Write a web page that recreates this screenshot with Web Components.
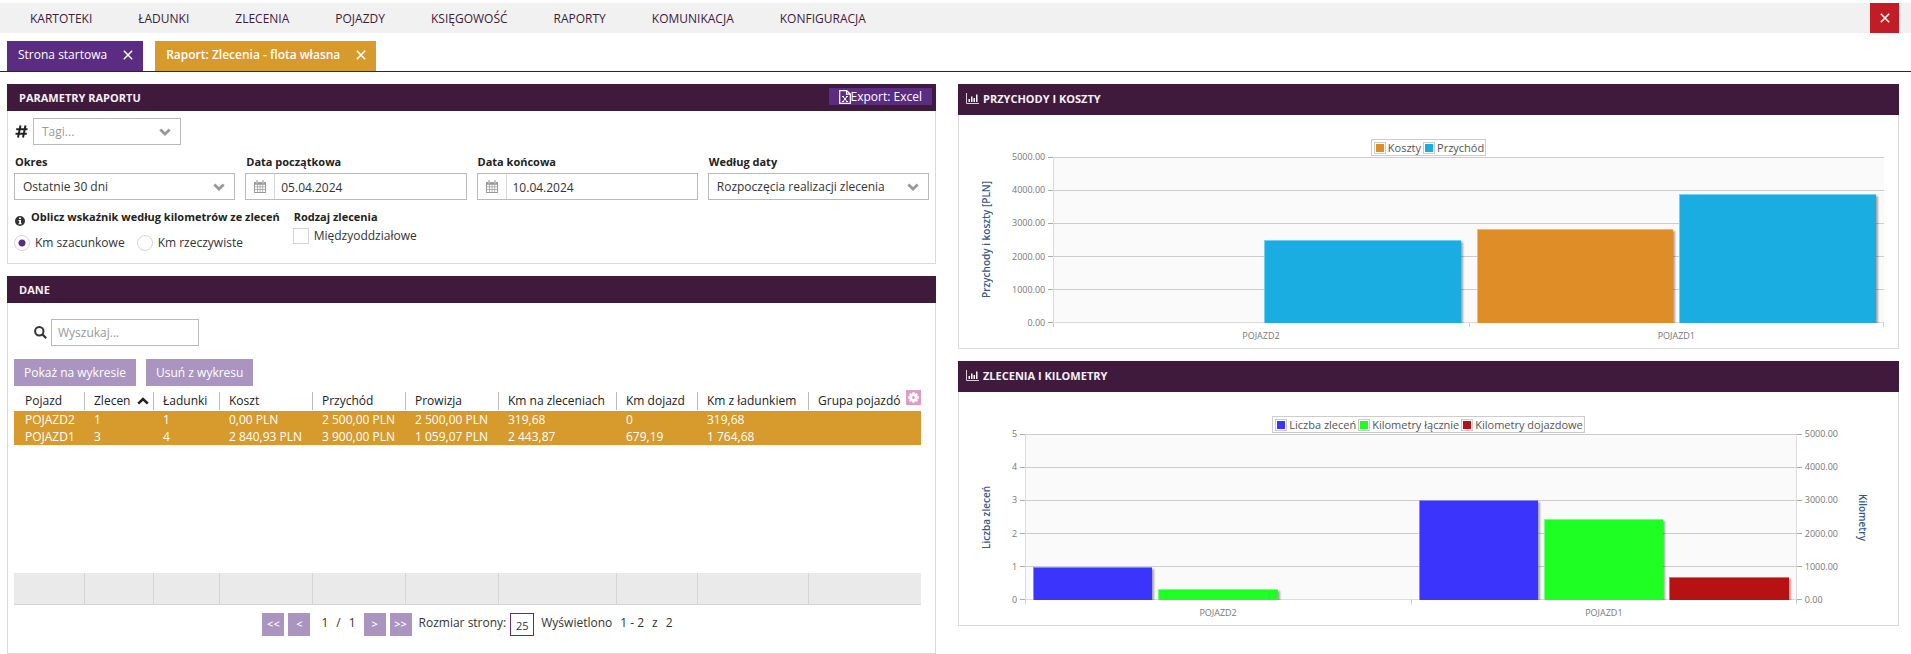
<!DOCTYPE html>
<html lang="pl">
<head>
<meta charset="utf-8">
<title>Raport: Zlecenia - flota własna</title>
<style>
    body {
        margin: 0;
        padding-top: 3px;
        background: #fff;
        color: #333;
        font: 12px/16px "Open Sans", "Noto Sans", sans-serif;
        --plum: #3f1a3c;
        --violet: #5a2d82;
        --lilac: #aa94c0;
        --gold: #d69a2d;
        --line: #dcd8dc;
        --field: #b9b9b9;
    }
    main {
        display: grid;
        grid-template-columns: 929fr 941fr;
        column-gap: 22px;
        padding: 12px 12px 0 7px;
        align-items: start;
    }
    .column {
        display: flex;
        flex-direction: column;
        gap: 12px;
        min-width: 0;
    }
</style>
</head>
<body>
<app-menu></app-menu>
<tab-bar>
    <tab-item>Strona startowa</tab-item>
    <tab-item active>Raport: Zlecenia - flota własna</tab-item>
</tab-bar>
<main>
    <div class="column">
        <report-panel heading="Parametry raportu">
            <export-button slot="actions">Export: Excel</export-button>
            <report-params></report-params>
        </report-panel>
        <report-panel heading="Dane">
            <report-data></report-data>
        </report-panel>
    </div>
    <div class="column">
        <report-panel chart heading="Przychody i koszty">
            <bar-chart id="income"></bar-chart>
        </report-panel>
        <report-panel chart heading="Zlecenia i kilometry">
            <bar-chart id="distance"></bar-chart>
        </report-panel>
    </div>
</main>

<script>
// Rules shared by every shadow root
const base = `
    :host, *, *::before, *::after { box-sizing: border-box; }
    button, input, select { font: inherit; color: inherit; margin: 0; border-radius: 0; }
    button { border: 0; padding: 0; background: none; cursor: pointer; }
    svg { display: block; flex: none; }
`;

const icons = {
    close: `<svg width="10" height="10" viewBox="0 0 10 10"><path d="M.8.8l8.400 8.400M9.200.8L.8 9.200" stroke="#fff" stroke-width="1.5" fill="none"/></svg>`,
    chevron: `<svg width="12" height="8" viewBox="0 0 12 8"><path d="M1.3 1.6L6 6l4.7-4.4" stroke="#999" stroke-width="2.8" fill="none"/></svg>`,
    chart: `<svg width="13" height="11" viewBox="0 0 13 11"><path d="M.5 0v10.5H13" stroke="#d9cfd9" fill="none"/><path d="M2.500 6h1.500v3H2.500zM5 3.500h1.500V9H5zM7.500 5H9v4H7.500zM10 1.500h1.500V9H10z" fill="#fff"/></svg>`,
    excel: `<svg width="12" height="14" viewBox="0 0 12 14"><path d="M.7.7h7L11.3 4v9.300H.7zM7.500.7V4.200h3.800" stroke="#fff" stroke-width="1.2" fill="none"/><path d="M4 6.500l4 5M8 6.500l-4 5M3 6.500h2M7 6.500h2M3 11.500h2M7 11.500h2" stroke="#fff" fill="none"/></svg>`,
    calendar: `<svg width="12" height="13" viewBox="0 0 12 13"><path d="M0 2h12v11H0z" fill="#999"/><path d="M2.200 0h1.600v3H2.200zM8.200 0h1.600v3H8.200z" fill="#999" stroke="#fff" stroke-width=".4"/><path d="M1 4.800h2v1.700H1zM3.700 4.800h2v1.700h-2zM6.400 4.800h2v1.700h-2zM9.100 4.800H11v1.700H9.100zM1 7.300h2V9H1zM3.700 7.300h2V9h-2zM6.400 7.300h2V9h-2zM9.100 7.300H11V9H9.100zM1 9.800h2V12H1zM3.700 9.800h2V12h-2zM6.400 9.800h2V12h-2zM9.100 9.800H11V12H9.100z" fill="#fff"/></svg>`,
    info: `<svg width="10" height="10" viewBox="0 0 10 10"><circle cx="5" cy="5" r="5" fill="#333"/><path d="M4 1.500h2V3H4zM3.500 4H6v3.200h.7v1H3.500v-1h.7V5h-.7z" fill="#fff"/></svg>`,
    hash: `<svg width="13" height="13" viewBox="0 0 13 13"><path d="M5.500.5l-2.500 12M10.500.5l-2.500 12M1.200 4.200h11.300M.5 8.800h11.300" stroke="#222" stroke-width="2" fill="none"/></svg>`,
    search: `<svg width="13" height="13" viewBox="0 0 13 13"><circle cx="5.300" cy="5.300" r="4.200" stroke="#333" stroke-width="2" fill="none"/><path d="M8.300 8.300l3.900 3.900" stroke="#333" stroke-width="2.200"/></svg>`,
    sort: `<svg width="12" height="8" viewBox="0 0 12 8"><path d="M1.200 6.600L6 2l4.800 4.600" stroke="#222" stroke-width="2.600" fill="none"/></svg>`,
    gear: `<svg width="11" height="11" viewBox="-5.500 -5.500 11 11"><g fill="#fff"><circle r="4"/><path d="M-1.200-5.300h2.400v10.600h-2.400zM-5.300-1.200h10.600v2.400H-5.300z"/><path d="M-1.200-5.300h2.400v10.600h-2.400zM-5.300-1.200h10.600v2.400H-5.300z" transform="rotate(45)"/></g><circle r="1.500" fill="#e59ac4"/></svg>`
};

// Base class: renders css() and html() in an open shadow root
class Block extends HTMLElement {
    connectedCallback() {
        if (this.shadowRoot) return;
        const template = document.createElement("template");
        template.innerHTML = `<style>${base}${this.css()}</style>${this.html()}`;
        this.attachShadow({ mode: "open" }).appendChild(template.content.cloneNode(true));
    }
}

class AppMenu extends Block {
    css() {
        return `
            :host { display: block; background: #f1f1f1; }
            nav { display: flex; align-items: center; height: 30px; padding: 0 12px 0 30px; }
            a { color: var(--plum); text-decoration: none; padding-top: 2px; margin-right: 46px; text-transform: uppercase; }
            button { margin-left: auto; width: 29px; height: 30px; background: #c01d27; display: grid; place-items: center; }
        `;
    }
    html() {
        const items = ["Kartoteki", "Ładunki", "Zlecenia", "Pojazdy", "Księgowość", "Raporty", "Komunikacja", "Konfiguracja"];
        return `<nav>${items.map(item => `<a href="#">${item}</a>`).join("")}
            <button type="button" aria-label="Zamknij">${icons.close}</button></nav>`;
    }
}

class TabBar extends Block {
    css() {
        return `:host { display: flex; gap: 12px; padding: 8px 7px 0; border-bottom: 1px solid var(--plum); }`;
    }
    html() {
        return `<slot></slot>`;
    }
}

class TabItem extends Block {
    css() {
        return `
            :host { display: flex; align-items: center; gap: 16px; height: 30px; padding: 0 10px 2px 11px; background: var(--violet); color: #fff; }
            :host([active]) { background: var(--gold); font-weight: 600; }
            a { color: inherit; text-decoration: none; }
        `;
    }
    html() {
        return `<a href="#"><slot></slot></a><button type="button" aria-label="Zamknij kartę">${icons.close}</button>`;
    }
}

class ReportPanel extends Block {
    css() {
        return `
            :host { display: block; }
            header { display: flex; align-items: center; justify-content: space-between; min-height: 27px; padding: 0 4px 0 12px; background: var(--plum); }
            h2 { display: flex; align-items: center; gap: 4px; margin: 0; font-size: 11px; line-height: 16px; color: #f4f0f4; text-transform: uppercase; }
            :host([chart]) header { min-height: 31px; padding: 0 8px 2px; }
            .body { border: 1px solid var(--line); border-top: 0; }
        `;
    }
    html() {
        const icon = this.hasAttribute("chart") ? icons.chart : "";
        return `<header><h2>${icon}<span>${this.getAttribute("heading")}</span></h2><slot name="actions"></slot></header>
            <div class="body"><slot></slot></div>`;
    }
}

class ExportButton extends Block {
    css() {
        return `
            :host { display: block; margin-bottom: 2px; }
            button { display: flex; align-items: center; height: 17px; padding: 0 10px; background: var(--violet); color: #fff; }
        `;
    }
    html() {
        return `<button type="button">${icons.excel}<slot></slot></button>`;
    }
}

// Drop-down with its own arrow; attributes: value, label, muted
class SelectField extends Block {
    css() {
        return `
            :host { display: block; min-width: 0; }
            label { display: block; padding-left: 1px; margin-bottom: 3px; font-size: 11px; font-weight: bold; color: #222; }
            .box { display: grid; align-items: center; }
            select, svg { grid-area: 1 / 1; }
            select { appearance: none; width: 100%; height: 27px; padding: 0 28px 0 8px; border: 1px solid var(--field); background: #fff; }
            :host([muted]) select { color: #999; }
            svg { justify-self: end; margin-right: 10px; pointer-events: none; }
        `;
    }
    html() {
        const label = this.getAttribute("label");
        const value = this.getAttribute("value");
        return `${label ? `<label for="field">${label}</label>` : ""}
            <div class="box"><select id="field" aria-label="${label || "Tagi"}"><option>${value}</option></select>${icons.chevron}</div>`;
    }
}

class DateField extends Block {
    css() {
        return `
            :host { display: block; min-width: 0; }
            label { display: block; padding-left: 1px; margin-bottom: 3px; font-size: 11px; font-weight: bold; color: #222; }
            .box { display: flex; height: 27px; border: 1px solid var(--field); }
            button { width: 29px; display: grid; place-items: center; border-right: 1px solid var(--line); }
            input { flex: 1; min-width: 0; border: 0; padding: 2px 6px 0; background: none; }
        `;
    }
    html() {
        return `<label for="field">${this.getAttribute("label")}</label>
            <div class="box"><button type="button" aria-label="Kalendarz">${icons.calendar}</button>
            <input id="field" type="text" value="${this.getAttribute("value")}"></div>`;
    }
}

class ReportParams extends Block {
    css() {
        return `
            :host { display: block; padding: 7px 6px 12px; }
            .tags { display: flex; align-items: center; gap: 5px; padding-left: 1px; }
            .tags select-field { width: 148px; }
            .fields { display: grid; grid-template-columns: repeat(4, 1fr); gap: 10px; margin-top: 9px; }
            .options { display: flex; gap: 12px; margin-top: 9px; }
            fieldset { border: 0; margin: 0; padding: 0; min-width: 0; }
            legend { display: flex; align-items: flex-start; gap: 6px; height: 16px; padding: 0 1px; font-size: 11px; font-weight: bold; color: #222; }
            legend svg { margin-top: 7px; }
            .radios { display: flex; gap: 12px; margin-top: 10px; }
            .options label { display: flex; align-items: center; gap: 5px; }
            input { appearance: none; width: 16px; height: 16px; border: 1px solid #dccfdc; background: #fff; }
            input[type=radio] { border-radius: 50%; }
            input[type=radio]:checked { background: radial-gradient(var(--violet) 3px, #fff 4px); }
            .kind label { margin-top: 3px; }
        `;
    }
    html() {
        return `
            <div class="tags">${icons.hash}<select-field muted value="Tagi..."></select-field></div>
            <div class="fields">
                <select-field label="Okres" value="Ostatnie 30 dni"></select-field>
                <date-field label="Data początkowa" value="05.04.2024"></date-field>
                <date-field label="Data końcowa" value="10.04.2024"></date-field>
                <select-field label="Według daty" value="Rozpoczęcia realizacji zlecenia"></select-field>
            </div>
            <div class="options">
                <fieldset>
                    <legend>${icons.info}<span>Oblicz wskaźnik według kilometrów ze zleceń</span></legend>
                    <div class="radios">
                        <label><input type="radio" name="km" checked>Km szacunkowe</label>
                        <label><input type="radio" name="km">Km rzeczywiste</label>
                    </div>
                </fieldset>
                <fieldset class="kind">
                    <legend>Rodzaj zlecenia</legend>
                    <label><input type="checkbox">Międzyoddziałowe</label>
                </fieldset>
            </div>`;
    }
}

class ReportData extends Block {
    css() {
        return `
            :host { display: block; padding: 16px 14px 17px 6px; }
            .search { display: flex; align-items: center; gap: 4px; padding-left: 20px; }
            .search input { width: 148px; height: 27px; padding: 0 6px; border: 1px solid var(--field); }
            ::placeholder { color: #999; opacity: 1; }
            .buttons { display: flex; gap: 10px; margin: 13px 0 4px; }
            .buttons button { height: 27px; padding: 0 10px; background: var(--lilac); color: #fff; }
            table { width: 100%; table-layout: fixed; border-collapse: collapse; }
            th, td { padding: 0; text-align: left; font-weight: normal; white-space: nowrap; }
            th { height: 21px; vertical-align: top; color: #222; }
            th div { display: flex; align-items: center; justify-content: space-between; height: 18px; margin-top: 2px; padding: 0 4px 0 9px; border-left: 1px solid #bbb; }
            th:first-child div { padding-left: 10px; border-left-color: transparent; }
            th:last-child { display: flex; }
            th:last-child div { flex: 1; min-width: 0; padding-right: 0; }
            th button { flex: none; width: 15px; height: 15px; display: grid; place-items: center; background: #e59ac4; }
            tbody tr { height: 17px; background: var(--gold); color: #fff; }
            td { padding-left: 10px; line-height: 16px; }
            td:first-child { padding-left: 11px; }
            tbody .rest { height: 128px; background: none; }
            tfoot td { height: 31px; background: #eaeaea; border: solid #d5d5d5; border-width: 0 0 1px 1px; }
            tfoot td:first-child { border-left: 0; }
            .pager { display: flex; justify-content: center; margin-top: 8px; }
            .pager button { width: 22px; height: 23px; background: var(--lilac); color: #fff; font-size: 11px; font-weight: 600; }
            .pager button + button { margin-left: 4px; }
            .pager div { display: flex; gap: 8px; line-height: 19px; }
            .pager label { line-height: 19px; padding: 0 4px 0 7px; }
            .pager .page { padding: 0 8px 0 11px; }
            .pager input { width: 24px; height: 23px; padding: 2px 0 0; border: 1px solid var(--violet); font-size: 11px; text-align: center; }
            .pager .shown { padding-left: 7px; }
        `;
    }
    html() {
        const columns = [
            ["Pojazd", 70], ["Zlecen", 69], ["Ładunki", 66], ["Koszt", 93], ["Przychód", 93], ["Prowizja", 93],
            ["Km na zleceniach", 118], ["Km dojazd", 81], ["Km z ładunkiem", 111], ["Grupa pojazdó", 113]
        ];
        const rows = [
            ["POJAZD2", "1", "1", "0,00 PLN", "2 500,00 PLN", "2 500,00 PLN", "319,68", "0", "319,68", ""],
            ["POJAZD1", "3", "4", "2 840,93 PLN", "3 900,00 PLN", "1 059,07 PLN", "2 443,87", "679,19", "1 764,68", ""]
        ];
        const head = columns.map(([name], i) => `<th scope="col"><div><span>${name}</span>${i === 1 ? icons.sort : ""}</div>${
            i === columns.length - 1 ? `<button type="button" aria-label="Ustawienia">${icons.gear}</button>` : ""}</th>`).join("");
        return `
            <div class="search">${icons.search}<input type="text" placeholder="Wyszukaj..." aria-label="Wyszukaj"></div>
            <div class="buttons"><button type="button">Pokaż na wykresie</button><button type="button">Usuń z wykresu</button></div>
            <table>
                <colgroup>${columns.map(([, width]) => `<col style="width: ${width}px">`).join("")}</colgroup>
                <thead><tr>${head}</tr></thead>
                <tbody>
                    ${rows.map(row => `<tr>${row.map(cell => `<td>${cell}</td>`).join("")}</tr>`).join("")}
                    <tr class="rest"><td colspan="${columns.length}"></td></tr>
                </tbody>
                <tfoot><tr>${columns.map(() => "<td></td>").join("")}</tr></tfoot>
            </table>
            <div class="pager">
                <button type="button">&lt;&lt;</button><button type="button">&lt;</button>
                <div class="page"><span>1</span><span>/</span><span>1</span></div>
                <button type="button">&gt;</button><button type="button">&gt;&gt;</button>
                <label for="size">Rozmiar strony:</label><input id="size" type="text" value="25">
                <div class="shown"><span>Wyświetlono</span><span>1 - 2</span><span>z</span><span>2</span></div>
            </div>`;
    }
}

const charts = {
    income: {
        left: { title: "Przychody i koszty [PLN]", ticks: ["5000.00", "4000.00", "3000.00", "2000.00", "1000.00", "0.00"] },
        series: [
            { name: "Koszty", color: "#df8d26", max: 5000, values: [0, 2840.93] },
            { name: "Przychód", color: "#19ade1", max: 5000, values: [2500, 3900] }
        ]
    },
    distance: {
        left: { title: "Liczba zleceń", ticks: ["5", "4", "3", "2", "1", "0"] },
        right: { title: "Kilometry", ticks: ["5000.00", "4000.00", "3000.00", "2000.00", "1000.00", "0.00"] },
        series: [
            { name: "Liczba zleceń", color: "#3a34fd", max: 5, values: [1, 3] },
            { name: "Kilometry łącznie", color: "#1eff23", max: 5000, values: [319.68, 2443.87] },
            { name: "Kilometry dojazdowe", color: "#b61214", max: 5000, values: [0, 679.19] }
        ]
    }
};

// Grouped bar chart, its data is looked up by the id of the element
class BarChart extends Block {
    css() {
        return `
            :host { display: block; padding: 24px 14px 5px 20px; color: #777; font-size: 9px; line-height: 12px; }
            .top { display: flex; justify-content: center; margin-left: -6px; }
            ul { display: flex; align-items: center; gap: 2px; height: 17px; margin: 0; padding: 0 1px 0 2px; list-style: none; border: 1px solid #ccc; background: #fff; font-size: 11px; color: #555; }
            li { display: flex; align-items: center; gap: 2px; }
            i { width: 12px; height: 12px; border: 1px solid #ccc; padding: 1px; background: var(--color) content-box; }
            .chart { display: grid; grid-template-columns: 14px auto 1fr auto auto; grid-template-rows: 166px auto; margin-top: 1px; }
            .title { writing-mode: vertical-rl; text-align: center; font-size: 10px; line-height: 14px; font-weight: 600; color: #355a8a; }
            .title.left { transform: rotate(180deg); }
            .title.right { margin: 0 14px 0 18px; }
            .ticks { display: flex; flex-direction: column; justify-content: space-between; margin: -6px 0; }
            .ticks.left { padding-left: 19px; }
            .ticks span { display: flex; align-items: center; gap: 3px; }
            .ticks.left span { justify-content: flex-end; }
            .ticks.left span::after, .ticks.right span::before { content: ""; width: 5px; height: 1px; background: #aaa; }
            .lines, .bars { grid-area: 1 / 3; }
            .lines { display: flex; flex-direction: column; background: #fafafa; border: solid #ddd; border-width: 0 0 1px 1px; }
            .lines.both { border-right-width: 1px; }
            .lines b { flex: 1; border-top: 1px solid #ccc; }
            .bars { display: flex; overflow: hidden; }
            .group { flex: 1; display: flex; align-items: flex-end; gap: 6px; padding: 0 8px; }
            .bar { flex: 1; height: var(--size); background: var(--color); box-shadow: inset 1px 1px rgba(255, 255, 255, .4), 2px 2px 2px rgba(0, 0, 0, .35); }
            .bar.empty { box-shadow: none; }
            .names { grid-area: 2 / 3; display: flex; text-align: center; }
            .names span { flex: 1; height: 20px; padding-top: 7px; background: linear-gradient(#ccc, #ccc) left top / 1px 4px no-repeat; }
            .names span:last-child { background: linear-gradient(#ccc, #ccc) left top / 1px 4px no-repeat, linear-gradient(#ccc, #ccc) right top / 1px 4px no-repeat; }
        `;
    }
    axis(side, axis) {
        const title = `<div class="title ${side}">${axis.title}</div>`;
        const ticks = `<div class="ticks ${side}">${axis.ticks.map(tick => `<span>${tick}</span>`).join("")}</div>`;
        return side === "left" ? title + ticks : ticks + title;
    }
    html() {
        const { left, right, series } = charts[this.id];
        const names = ["POJAZD2", "POJAZD1"];
        const bar = (item, i) => `<div class="bar ${item.values[i] ? "" : "empty"}" style="--color: ${item.color}; --size: ${item.values[i] / item.max * 100}%"></div>`;
        return `
            <div class="top"><ul>${series.map(item => `<li><i style="--color: ${item.color}"></i>${item.name}</li>`).join("")}</ul></div>
            <div class="chart">
                ${this.axis("left", left)}
                <div class="lines ${right ? "both" : ""}"><b></b><b></b><b></b><b></b><b></b></div>
                <div class="bars">${names.map((name, i) => `<div class="group">${series.map(item => bar(item, i)).join("")}</div>`).join("")}</div>
                ${right ? this.axis("right", right) : ""}
                <div class="names">${names.map(name => `<span>${name}</span>`).join("")}</div>
            </div>`;
    }
}

customElements.define("app-menu", AppMenu);
customElements.define("tab-bar", TabBar);
customElements.define("tab-item", TabItem);
customElements.define("report-panel", ReportPanel);
customElements.define("export-button", ExportButton);
customElements.define("select-field", SelectField);
customElements.define("date-field", DateField);
customElements.define("report-params", ReportParams);
customElements.define("report-data", ReportData);
customElements.define("bar-chart", BarChart);
</script>
</body>
</html>
